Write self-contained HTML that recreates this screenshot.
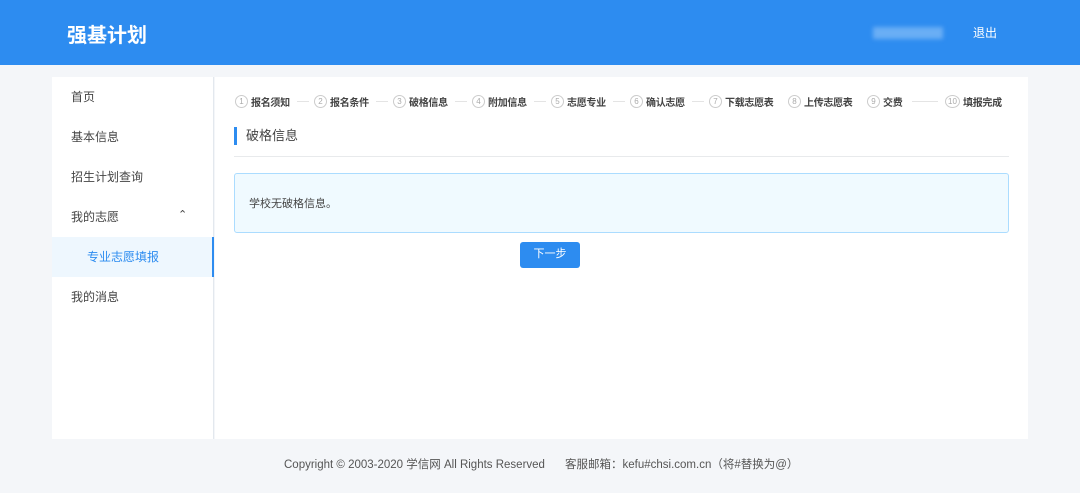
<!DOCTYPE html>
<html><head><meta charset="utf-8"><style>
*{margin:0;padding:0;box-sizing:border-box}
body{width:1080px;height:493px;background:#f4f6f9;font-family:"Liberation Sans","Noto Sans CJK SC",sans-serif;position:relative;overflow:hidden;color:#333}
.hd{position:absolute;left:0;top:0;width:1080px;height:65px;background:#2d8cf0}
.logo{position:absolute;left:67px;top:19px;color:#fff;font-size:20px;font-weight:bold}
.blur{position:absolute;left:873px;top:27px;width:70px;height:12px;background:#6aaef5;filter:blur(2px)}
.out{position:absolute;left:973px;top:24px;color:#fff;font-size:12px}
.side{position:absolute;left:52px;top:77px;width:162px;height:362px;background:#fff;border-right:1px solid #e3e8ee}
.side div{position:absolute;left:19px;font-size:12px;color:#444}
.side .act{left:0;top:160px;width:162px;height:40px;background:#eef7fe;border-right:2px solid #2d8cf0}
.main{position:absolute;left:215px;top:77px;width:813px;height:362px;background:#fff}
.st{position:absolute;top:94px;font-size:10px;font-weight:bold;color:#444;white-space:nowrap;display:flex;align-items:center;letter-spacing:-0.3px}
.st i{display:inline-block;width:13px;height:13px;border:1px solid #ccc;border-radius:50%;font-style:normal;font-weight:normal;font-size:8px;color:#aaa;text-align:center;line-height:11px;margin-right:3px;letter-spacing:0}
.ln{position:absolute;top:101px;height:1px;background:#e4e4e4}
.tt{position:absolute;left:234px;top:127px;height:18px;border-left:3px solid #2d8cf0;padding-left:9px;font-size:13px;color:#444;line-height:18px}
.hr{position:absolute;left:234px;top:156px;width:775px;height:1px;background:#e8eaec}
.box{position:absolute;left:234px;top:173px;width:775px;height:60px;background:#f0faff;border:1px solid #abdcff;border-radius:3px;font-size:11px;color:#444;padding:21px 0 0 14px}
.btn{position:absolute;left:520px;top:242px;width:60px;height:26px;background:#2d8cf0;border-radius:3px;color:#fff;font-size:11px;text-align:center;line-height:25px}
.ft{position:absolute;top:456px;font-size:11.5px;color:#555}
</style></head><body>
<div class="hd"><div class="logo">强基计划</div><div class="blur"></div><div class="out">退出</div></div>
<div class="side">
<div class="act"></div>
<div style="top:11px">首页</div>
<div style="top:51px">基本信息</div>
<div style="top:91px">招生计划查询</div>
<div style="top:131px">我的志愿</div>
<div style="top:131px;left:126px;font-size:11px">⌃</div>
<div style="top:171px;left:35px;color:#2d8cf0">专业志愿填报</div>
<div style="top:211px">我的消息</div>
</div>
<div class="main"></div>
<div class="st" style="left:235px"><i>1</i>报名须知</div><div class="ln" style="left:297px;width:12px"></div>
<div class="st" style="left:314px"><i>2</i>报名条件</div><div class="ln" style="left:376px;width:12px"></div>
<div class="st" style="left:393px"><i>3</i>破格信息</div><div class="ln" style="left:455px;width:12px"></div>
<div class="st" style="left:472px"><i>4</i>附加信息</div><div class="ln" style="left:534px;width:12px"></div>
<div class="st" style="left:551px"><i>5</i>志愿专业</div><div class="ln" style="left:613px;width:12px"></div>
<div class="st" style="left:630px"><i>6</i>确认志愿</div><div class="ln" style="left:692px;width:12px"></div>
<div class="st" style="left:709px"><i>7</i>下载志愿表</div>
<div class="st" style="left:788px"><i>8</i>上传志愿表</div>
<div class="st" style="left:867px"><i>9</i>交费</div><div class="ln" style="left:912px;width:26px"></div>
<div class="st" style="left:945px"><i style="width:15px">10</i>填报完成</div>
<div class="tt">破格信息</div>
<div class="hr"></div>
<div class="box">学校无破格信息。</div>
<div class="btn">下一步</div>
<div class="ft" style="left:284px">Copyright © 2003-2020 学信网 All Rights Reserved</div>
<div class="ft" style="left:565px">客服邮箱：kefu#chsi.com.cn（将#替换为@）</div>
</body></html>
